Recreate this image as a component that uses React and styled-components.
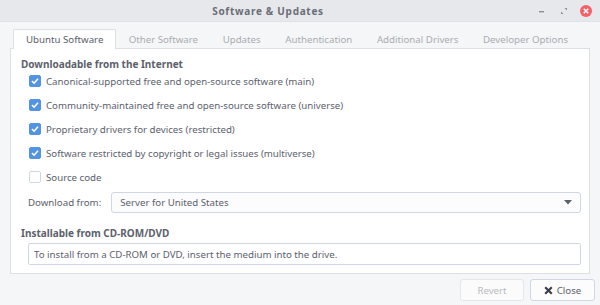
import styled, { createGlobalStyle } from "styled-components";

const Global = createGlobalStyle`
  html, body { margin: 0; padding: 0; }
  body {
    width: 600px;
    height: 305px;
    overflow: hidden;
    font-family: "Noto Sans", "DejaVu Sans", sans-serif;
    font-size: 9.7px;
    color: #5c616c;
    background: #f5f6f7;
  }
`;

const Window = styled.div`
  width: 600px;
  height: 305px;
  display: flex;
  flex-direction: column;
  background: #f5f6f7;
`;

const TitleBar = styled.div`
  height: 21px;
  flex: none;
  display: flex;
  align-items: center;
  justify-content: center;
  position: relative;
  padding-right: 64px;
  background: #e7e8eb;
  border-bottom: 1px solid #dfe1e5;
`;

const Title = styled.span`
  font-weight: bold;
  font-size: 10px;
  letter-spacing: 0.7px;
  color: #6a6e77;
`;

const Controls = styled.div`
  position: absolute;
  right: 8px;
  top: 0;
  height: 21px;
  display: flex;
  align-items: center;
  gap: 10px;
`;

const CtlBtn = styled.div`
  width: 12px;
  height: 12px;
  display: flex;
  align-items: center;
  justify-content: center;
`;

const Body = styled.div`
  flex: 1;
  display: flex;
  flex-direction: column;
  padding: 7px 10px 0 10px;
`;

const Tabs = styled.div`
  display: flex;
  height: 19px;
  padding-left: 3px;
  position: relative;
  z-index: 1;
`;

const Tab = styled.div`
  padding: 0 ${(p) => (p.$active ? 12 : 11.3)}px;
  display: flex;
  align-items: center;
  white-space: nowrap;
  color: ${(p) => (p.$active ? "#5c616c" : "#a9acb2")};
  background: ${(p) => (p.$active ? "#ffffff" : "transparent")};
  border: 1px solid ${(p) => (p.$active ? "#dcdfe3" : "transparent")};
  border-bottom: none;
  border-radius: 2px 2px 0 0;
  box-sizing: border-box;
  margin-bottom: -1px;
  height: 20px;
`;

const Panel = styled.div`
  background: #ffffff;
  border: 1px solid #dcdfe3;
  height: 226px;
  box-sizing: border-box;
  padding: 7px 8px 0 10px;
  display: flex;
  flex-direction: column;
`;

const SectionTitle = styled.div`
  font-weight: bold;
  font-size: 10px;
  height: 16px;
  line-height: 16px;
  color: #5c616c;
  margin-top: ${(p) => p.$top || 0}px;
`;

const Checks = styled.div`
  display: flex;
  flex-direction: column;
  padding-left: 8px;
  margin-top: -3px;
`;

const CheckRow = styled.label`
  display: flex;
  align-items: center;
  gap: 5px;
  height: 24px;
`;

const Box = styled.span`
  width: 12px;
  height: 12px;
  box-sizing: border-box;
  border-radius: 2px;
  display: flex;
  align-items: center;
  justify-content: center;
  background: ${(p) => (p.$on ? "#5294e2" : "#ffffff")};
  border: 1px solid ${(p) => (p.$on ? "#5294e2" : "#cfd6e6")};
`;

const FromRow = styled.div`
  display: flex;
  align-items: center;
  padding-left: 7px;
  margin-top: 3px;
  gap: 10px;
  height: 21px;
  white-space: nowrap;
`;

const Combo = styled.div`
  flex: 1;
  height: 21px;
  box-sizing: border-box;
  border: 1px solid #cfd6e6;
  border-radius: 3px;
  background: #fcfcfc;
  display: flex;
  align-items: center;
  justify-content: space-between;
  padding: 0 8px 0 8px;
`;

const Entry = styled.div`
  margin: 2px 0 0 7px;
  height: 22px;
  box-sizing: border-box;
  border: 1px solid #cfd6e6;
  border-radius: 2px;
  background: #ffffff;
  display: flex;
  align-items: center;
  padding-left: 5px;
`;

const Footer = styled.div`
  display: flex;
  justify-content: flex-end;
  gap: 6px;
  padding-top: 5px;
  margin-right: -5px;
`;

const Button = styled.div`
  height: 22px;
  box-sizing: border-box;
  border: 1px solid #cfd6e6;
  border-radius: 3px;
  background: ${(p) => (p.$disabled ? "#fbfbfc" : "#fcfcfc")};
  color: ${(p) => (p.$disabled ? "#b7bac0" : "#5c616c")};
  border-color: ${(p) => (p.$disabled ? "#e4e7ec" : "#cfd6e6")};
  width: ${(p) => p.$w}px;
  display: flex;
  align-items: center;
  justify-content: center;
  gap: 4px;
`;

const Check = () => (
  <svg width="8" height="8" viewBox="0 0 8 8">
    <path d="M1 4.2 L3.1 6.2 L7 1.8" fill="none" stroke="#fff" strokeWidth="1.6" />
  </svg>
);

const sources = [
  ["Canonical-supported free and open-source software (main)", true],
  ["Community-maintained free and open-source software (universe)", true],
  ["Proprietary drivers for devices (restricted)", true],
  ["Software restricted by copyright or legal issues (multiverse)", true],
  ["Source code", false],
];

const tabs = [
  ["Ubuntu Software", true],
  ["Other Software"],
  ["Updates"],
  ["Authentication"],
  ["Additional Drivers"],
  ["Developer Options"],
];

export default function App() {
  return (
    <>
      <Global />
      <Window>
        <TitleBar>
          <Title>Software &amp; Updates</Title>
          <Controls>
            <CtlBtn>
              <svg width="8" height="8" viewBox="0 0 8 8">
                <rect x="1" y="4" width="5" height="1.4" fill="#8b8e94" />
              </svg>
            </CtlBtn>
            <CtlBtn>
              <svg width="8" height="8" viewBox="0 0 8 8">
                <path d="M4.5 1 H7 V3.5 Z M3.5 7 H1 V4.5 Z" fill="#8b8e94" />
              </svg>
            </CtlBtn>
            <CtlBtn>
              <svg width="12" height="12" viewBox="0 0 12 12">
                <circle cx="6" cy="6" r="6" fill="#f46067" />
                <path d="M3.8 3.8 L8.2 8.2 M8.2 3.8 L3.8 8.2" stroke="#fff" strokeWidth="1.6" />
              </svg>
            </CtlBtn>
          </Controls>
        </TitleBar>
        <Body>
          <Tabs>
            {tabs.map(([t, a]) => (
              <Tab key={t} $active={a}>
                {t}
              </Tab>
            ))}
          </Tabs>
          <Panel>
            <SectionTitle>Downloadable from the Internet</SectionTitle>
            <Checks>
              {sources.map(([s, on]) => (
                <CheckRow key={s}>
                  <Box $on={on}>{on && <Check />}</Box>
                  {s}
                </CheckRow>
              ))}
            </Checks>
            <FromRow>
              <span>Download from:</span>
              <Combo>
                <span>Server for United States</span>
                <svg width="8" height="5" viewBox="0 0 8 5">
                  <path d="M0 0 H8 L4 4.5 Z" fill="#5c616c" />
                </svg>
              </Combo>
            </FromRow>
            <SectionTitle $top={12}>Installable from CD-ROM/DVD</SectionTitle>
            <Entry>
              To install from a CD-ROM or DVD, insert the medium into the drive.
            </Entry>
          </Panel>
          <Footer>
            <Button $disabled $w={64}>Revert</Button>
            <Button $w={65}>
              <svg width="9" height="9" viewBox="0 0 9 9">
                <path d="M1.2 1.2 L7.8 7.8 M7.8 1.2 L1.2 7.8" stroke="#3b3e45" strokeWidth="2.2" />
              </svg>
              Close
            </Button>
          </Footer>
        </Body>
      </Window>
    </>
  );
}
